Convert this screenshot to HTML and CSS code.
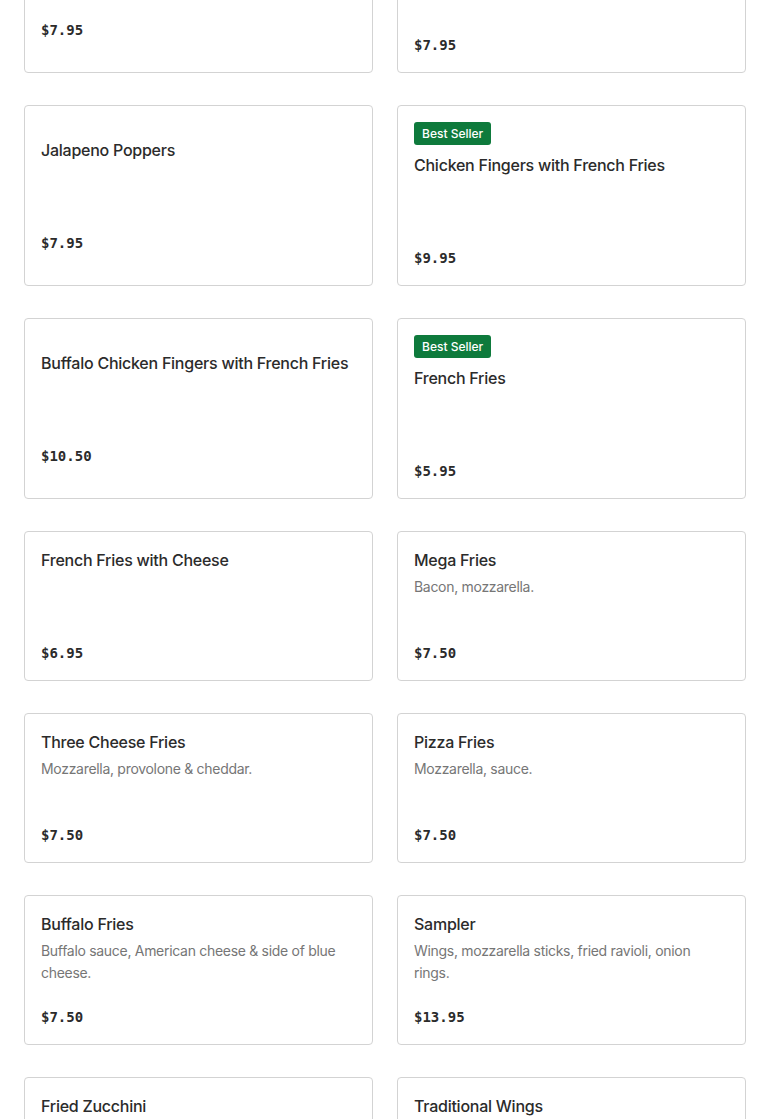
FILE: index.html
```html
<!DOCTYPE html>
<html lang="en">
<head>
<meta charset="utf-8">
<title>Menu</title>
<link rel="stylesheet" href="styles.css">
</head>
<body>
<main class="menu">
  <div class="grid">
    <article class="card">
      <div class="info"><h3 class="name">Mozzarella Sticks</h3><p class="desc"></p></div>
      <div class="price">$7.95</div>
    </article>
    <article class="card">
      <span class="badge">Best Seller</span>
      <div class="info"><h3 class="name">Onion Rings</h3><p class="desc"></p></div>
      <div class="price">$7.95</div>
    </article>

    <article class="card">
      <div class="info"><h3 class="name">Jalapeno Poppers</h3><p class="desc"></p></div>
      <div class="price">$7.95</div>
    </article>
    <article class="card">
      <span class="badge">Best Seller</span>
      <div class="info"><h3 class="name">Chicken Fingers with French Fries</h3><p class="desc"></p></div>
      <div class="price">$9.95</div>
    </article>

    <article class="card">
      <div class="info"><h3 class="name">Buffalo Chicken Fingers with French Fries</h3><p class="desc"></p></div>
      <div class="price">$10.50</div>
    </article>
    <article class="card">
      <span class="badge">Best Seller</span>
      <div class="info"><h3 class="name">French Fries</h3><p class="desc"></p></div>
      <div class="price">$5.95</div>
    </article>

    <article class="card">
      <div class="info"><h3 class="name">French Fries with Cheese</h3><p class="desc"></p></div>
      <div class="price">$6.95</div>
    </article>
    <article class="card">
      <div class="info"><h3 class="name">Mega Fries</h3><p class="desc">Bacon, mozzarella.</p></div>
      <div class="price">$7.50</div>
    </article>

    <article class="card">
      <div class="info"><h3 class="name">Three Cheese Fries</h3><p class="desc">Mozzarella, provolone &amp; cheddar.</p></div>
      <div class="price">$7.50</div>
    </article>
    <article class="card">
      <div class="info"><h3 class="name">Pizza Fries</h3><p class="desc">Mozzarella, sauce.</p></div>
      <div class="price">$7.50</div>
    </article>

    <article class="card">
      <div class="info"><h3 class="name">Buffalo Fries</h3><p class="desc">Buffalo sauce, American cheese &amp; side of blue cheese.</p></div>
      <div class="price">$7.50</div>
    </article>
    <article class="card">
      <div class="info"><h3 class="name">Sampler</h3><p class="desc">Wings, mozzarella sticks, fried ravioli, onion rings.</p></div>
      <div class="price">$13.95</div>
    </article>

    <article class="card">
      <div class="info"><h3 class="name">Fried Zucchini</h3><p class="desc"></p></div>
      <div class="price">$7.95</div>
    </article>
    <article class="card">
      <div class="info"><h3 class="name">Traditional Wings</h3><p class="desc"></p></div>
      <div class="price">$9.95</div>
    </article>
  </div>
</main>
</body>
</html>
```

FILE: styles.css
```css
html, body {
  margin: 0;
  padding: 0;
  background: #ffffff;
}

body {
  font-family: "Inter", "Liberation Sans", sans-serif;
  color: #2b2b2b;
  overflow: hidden;
}

.menu {
  padding: 0 24px;
}

.grid {
  display: grid;
  grid-template-columns: 1fr 1fr;
  column-gap: 24px;
  row-gap: 32px;
  margin-top: -108px;
}

.card {
  display: flex;
  flex-direction: column;
  justify-content: center;
  align-items: flex-start;
  border: 1px solid #d3d3d3;
  border-radius: 4px;
  padding: 16px;
  background: #fff;
}

.badge {
  display: inline-block;
  height: 23px;
  line-height: 23px;
  padding: 0 8px;
  margin-bottom: 8px;
  background: #0e7a3c;
  color: #ffffff;
  font-size: 12px;
  font-weight: 500;
  border-radius: 3px;
  box-sizing: border-box;
}

.info {
  min-height: 72px;
  width: 100%;
}

.name {
  margin: 0;
  font-size: 16px;
  line-height: 24px;
  font-weight: 500;
  letter-spacing: -0.25px;
  color: #2b2b2b;
}

.desc {
  margin: 4px 0 0;
  font-size: 14px;
  line-height: 22px;
  letter-spacing: -0.3px;
  color: #767676;
}

.price {
  margin-top: 22px;
  font-family: "DejaVu Sans Mono", "Liberation Mono", monospace;
  font-size: 14px;
  line-height: 22px;
  font-weight: 700;
  color: #2b2b2b;
}
```
